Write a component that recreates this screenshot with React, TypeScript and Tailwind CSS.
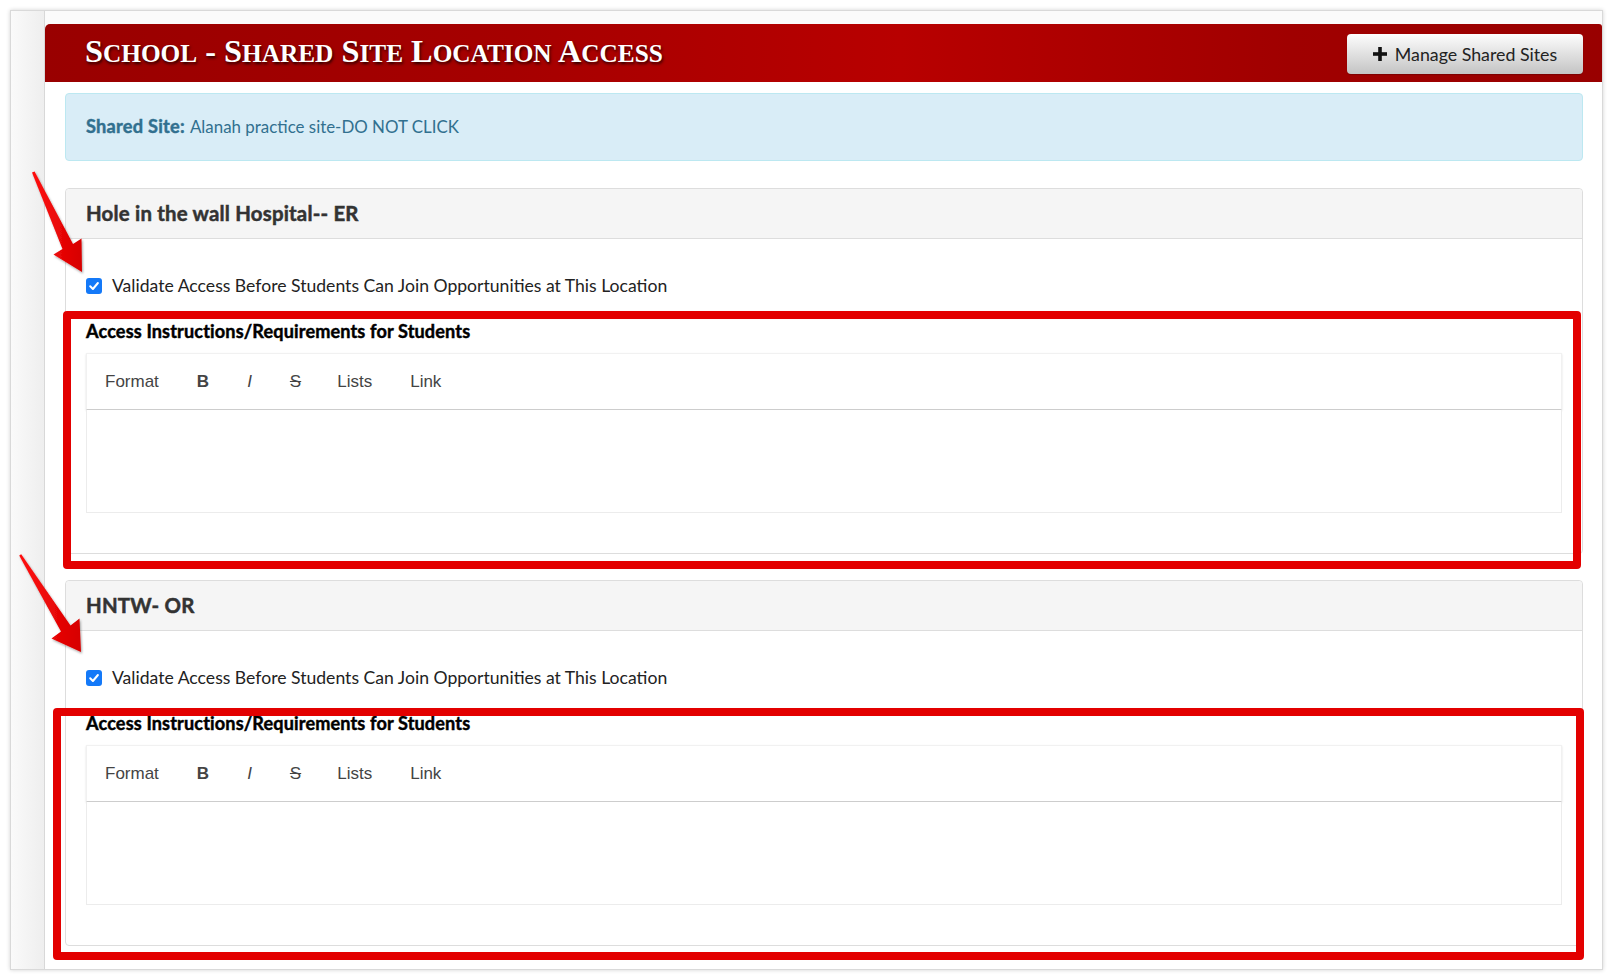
import React from "react";

function PlusIcon() {
  return (
    <svg width="14" height="14" viewBox="0 0 14 14" aria-hidden="true">
      <rect x="5.2" y="0" width="3.6" height="14" fill="#111" />
      <rect x="0" y="5.2" width="14" height="3.6" fill="#111" />
    </svg>
  );
}

function CheckBox() {
  return (
    <span className="flex h-[16px] w-[16px] shrink-0 items-center justify-center rounded-[3px] bg-[#1479f8]">
      <svg width="12" height="12" viewBox="0 0 12 12" aria-hidden="true">
        <path d="M2.2 6.3 L4.9 9 L9.9 3" fill="none" stroke="#fff" strokeWidth="2" strokeLinecap="round" strokeLinejoin="round" />
      </svg>
    </span>
  );
}

function Editor() {
  return (
    <div>
      <div className="flex h-[57px] items-center border border-[#f1f1f1] border-b-[#cdcdcd] bg-white pl-[18px] font-['Liberation_Sans',Arial,sans-serif] text-[17px] text-[#444] shadow-[0_1px_2px_rgba(0,0,0,0.12)]">
        <span>Format</span>
        <span className="ml-[38px] font-bold">B</span>
        <span className="ml-[38px] italic">I</span>
        <span className="ml-[38px] line-through">S</span>
        <span className="ml-[36px]">Lists</span>
        <span className="ml-[38px]">Link</span>
      </div>
      <div className="h-[103px] border border-t-0 border-[#ececec] bg-white" />
    </div>
  );
}

function LocationPanel({ title }: { title: string }) {
  return (
    <div className="rounded-[4px] border border-[#dddddd] bg-white">
      <div className="flex h-[50px] items-center rounded-t-[4px] border-b border-[#dddddd] bg-[#f5f5f5] px-[20px] text-[20.4px] font-bold tracking-[0.2px] text-[#333] [-webkit-text-stroke:0.5px_#333]">
        {title}
      </div>
      <div className="px-[20px] pt-[37px] pb-[40px]">
        <label className="flex h-[20px] items-center gap-[10px] text-[17.6px] text-[#222]">
          <CheckBox />
          <span>Validate Access Before Students Can Join Opportunities at This Location</span>
        </label>
        <div className="mt-[25px] flex h-[22px] items-center text-[18.1px] font-bold tracking-[0.14px] text-black [-webkit-text-stroke:0.45px_#000]">
          Access Instructions/Requirements for Students
        </div>
        <div className="mt-[10px]">
          <Editor />
        </div>
      </div>
    </div>
  );
}

export default function App() {
  return (
    <div className="relative h-[978px] w-[1612px] overflow-hidden bg-white font-['Lato','Noto_Sans',sans-serif]">
      <div className="pl-[10px] pt-[10px]">
        <div className="flex h-[960px] w-[1593px] border border-[#d9d9d9] bg-white shadow-[0_0_4px_rgba(0,0,0,0.18)]">
          <div className="w-[34px] shrink-0 border-r border-[#d8d8d8] bg-[linear-gradient(to_right,#fafafa,#eeeeee)]" />
          <div className="flex flex-1 flex-col bg-[#fbfbfb] pt-[13px]">
            <div className="flex h-[58px] items-center justify-between rounded-tl-[5px] rounded-tr-[3px] bg-[linear-gradient(to_right,#990000_0%,#a60000_30%,#b80000_55%,#a00000_80%,#990000_100%)] pl-[40px] pr-[19px]">
              <h1 className="mt-[-3px] font-['Liberation_Serif',serif] text-[32.3px] font-bold leading-none text-white [text-shadow:1px_2px_3px_rgba(0,0,0,0.75)]">
                S<span className="text-[25.3px] uppercase">chool</span> - S<span className="text-[25.3px] uppercase">hared</span> S<span className="text-[25.3px] uppercase">ite</span> L<span className="text-[25.3px] uppercase">ocation</span> A<span className="text-[25.3px] uppercase">ccess</span>
              </h1>
              <button className="mt-[2px] flex h-[40px] w-[236px] items-center justify-center gap-[8px] rounded-[4px] bg-[linear-gradient(to_bottom,#fdfdfd,#c4c4c4)] text-[17.8px] text-[#222] shadow-[0_1px_1px_rgba(0,0,0,0.2)]">
                <PlusIcon />
                <span>Manage Shared Sites</span>
              </button>
            </div>
            <div className="flex-1 bg-white pl-[20px] pr-[19px] pt-[11px]">
              <div className="flex h-[68px] items-center rounded-[4px] border border-[#bce8f1] bg-[#d9edf7] px-[20px] text-[16.9px] text-[#31708f]">
                <span className="text-[18.2px] font-bold tracking-[0.25px] [-webkit-text-stroke:0.45px_#31708f]">Shared Site:</span>
                <span className="ml-[5px]">Alanah practice site-DO NOT CLICK</span>
              </div>
              <div className="mt-[27px]">
                <LocationPanel title="Hole in the wall Hospital-- ER" />
              </div>
              <div className="mt-[26px]">
                <LocationPanel title="HNTW- OR" />
              </div>
            </div>
          </div>
        </div>
      </div>

      {/* annotation boxes */}
      <div className="pointer-events-none absolute left-[63px] top-[311px] h-[258px] w-[1518px] rounded-[4px] border-[8px] border-[#e30000]" />
      <div className="pointer-events-none absolute left-[53px] top-[708px] h-[252px] w-[1531px] rounded-[4px] border-[8px] border-[#e30000]" />

      {/* annotation arrows */}
      <svg className="pointer-events-none absolute left-0 top-0" width="1612" height="978" aria-hidden="true">
        <defs>
          <linearGradient id="arrowFill" x1="0" y1="0" x2="1" y2="0">
            <stop offset="0" stopColor="#ff1010" />
            <stop offset="1" stopColor="#d60000" />
          </linearGradient>
          <filter id="arrowShadow" x="-30%" y="-30%" width="160%" height="160%">
            <feDropShadow dx="1" dy="1.5" stdDeviation="1.2" floodColor="#000" floodOpacity="0.35" />
          </filter>
        </defs>
        <polygon
          points="32,172.4 34.6,171.4 73,244 81.5,238.5 82,272 53.5,254.5 62.5,249"
          fill="url(#arrowFill)"
          filter="url(#arrowShadow)"
        />
        <polygon
          points="19.2,555.5 21.2,554.3 70.5,625.5 79.5,618.5 81,652 51.5,638.5 61,631.5"
          fill="url(#arrowFill)"
          filter="url(#arrowShadow)"
        />
      </svg>
    </div>
  );
}
